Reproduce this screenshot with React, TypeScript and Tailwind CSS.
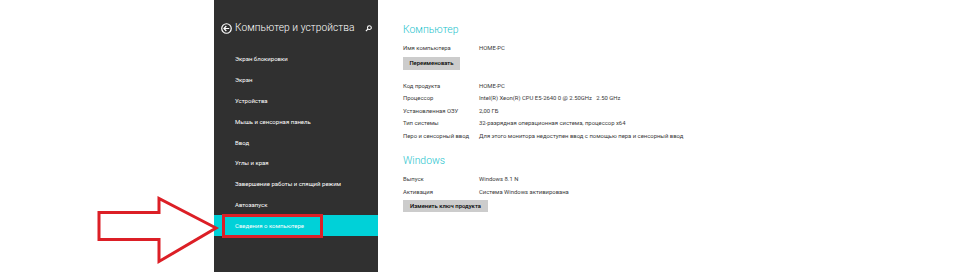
export default function App() {
  const menu = [
    "Экран блокировки",
    "Экран",
    "Устройства",
    "Мышь и сенсорная панель",
    "Ввод",
    "Углы и края",
    "Завершение работы и спящий режим",
    "Автозапуск",
  ];
  const info = [
    ["Код продукта", "HOME-PC"],
    ["Процессор", "Intel(R) Xeon(R) CPU E5-2640 0 @ 2.50GHz   2.50 GHz"],
    ["Установленная ОЗУ", "2,00 ГБ"],
    ["Тип системы", "32-разрядная операционная система, процессор x64"],
    ["Перо и сенсорный ввод", "Для этого монитора недоступен ввод с помощью пера и сенсорный ввод"],
  ];
  return (
    <div className="w-[967px] h-[272px] bg-white flex overflow-hidden font-['Roboto','Noto_Sans',sans-serif]">
      <div className="w-[214px] shrink-0 relative">
        <svg className="absolute left-0 top-0 z-10 overflow-visible" width="214" height="272" viewBox="0 0 214 272">
          <polygon
            points="99,212.5 159,212.5 159,198.5 216,228 159,261.5 159,239.5 99,239.5"
            fill="none"
            stroke="#dc1f26"
            strokeWidth="3"
            strokeLinejoin="miter"
          />
        </svg>
      </div>

      <div className="w-[164px] shrink-0 h-full bg-[#303030] flex flex-col">
        <div className="h-[48.6px] pt-[20px] pl-[7px] flex items-start">
          <div className="h-[16px] flex items-center">
            <svg width="11" height="11" viewBox="0 0 12 12" className="mr-[3px]">
              <circle cx="6" cy="6" r="5.2" fill="none" stroke="#ffffff" strokeWidth="1.3" />
              <path d="M3.2 6 H9 M5.8 3.3 L3.2 6 L5.8 8.7" fill="none" stroke="#ffffff" strokeWidth="1.3" />
            </svg>
            <span className="text-[10.2px] font-light text-white leading-[16px] whitespace-nowrap tracking-[0.05px]">
              Компьютер и устройства
            </span>
            <svg width="7" height="7" viewBox="0 0 8 8" className="ml-[11px]">
              <circle cx="5" cy="3" r="2.2" fill="none" stroke="#ffffff" strokeWidth="1.2" />
              <path d="M3.5 4.5 L1 7" stroke="#ffffff" strokeWidth="1.4" />
            </svg>
          </div>
        </div>
        {menu.map((m) => (
          <div key={m} className="h-[20.8px] flex items-center pl-[21px] text-[6px] text-white whitespace-nowrap">
            {m}
          </div>
        ))}
        <div className="h-[21px] flex items-center pl-[21px] text-[6px] text-white bg-[#00d1d8] relative whitespace-nowrap">
          Сведения о компьютере
          <div className="absolute left-[8px] top-[-1px] w-[101px] h-[24px] border-[3px] border-[#dc1f26]" />
        </div>
      </div>

      <div className="flex-1 pl-[25px] pt-[22px] flex flex-col text-[#3a3a3a] text-[5.9px]">
        <div className="h-[16px] leading-[16px] text-[10.4px] font-light text-[#1cc3cd]">Компьютер</div>
        <div className="mt-[4px] h-[12px] flex items-center">
          <span className="w-[76px] shrink-0">Имя компьютера</span>
          <span>HOME-PC</span>
        </div>
        <div className="mt-[3px] h-[13px] w-[57px] bg-[#cccccc] flex items-center justify-center font-medium text-black whitespace-nowrap">
          Переименовать
        </div>
        <div className="mt-[10px] flex flex-col">
          {info.map(([k, v]) => (
            <div key={k} className="h-[12.5px] flex items-center whitespace-nowrap">
              <span className="w-[76px] shrink-0">{k}</span>
              <span className="whitespace-pre">{v}</span>
            </div>
          ))}
        </div>
        <div className="mt-[10.5px] h-[16px] leading-[16px] text-[10.4px] font-light text-[#1cc3cd]">Windows</div>
        <div className="mt-[4px] h-[13px] flex items-center">
          <span className="w-[76px] shrink-0">Выпуск</span>
          <span>Windows 8.1 N</span>
        </div>
        <div className="h-[13px] flex items-center">
          <span className="w-[76px] shrink-0">Активация</span>
          <span>Система Windows активирована</span>
        </div>
        <div className="mt-[1px] h-[12px] w-[85px] bg-[#cccccc] flex items-center justify-center font-medium text-black whitespace-nowrap">
          Изменить ключ продукта
        </div>
      </div>
    </div>
  );
}
